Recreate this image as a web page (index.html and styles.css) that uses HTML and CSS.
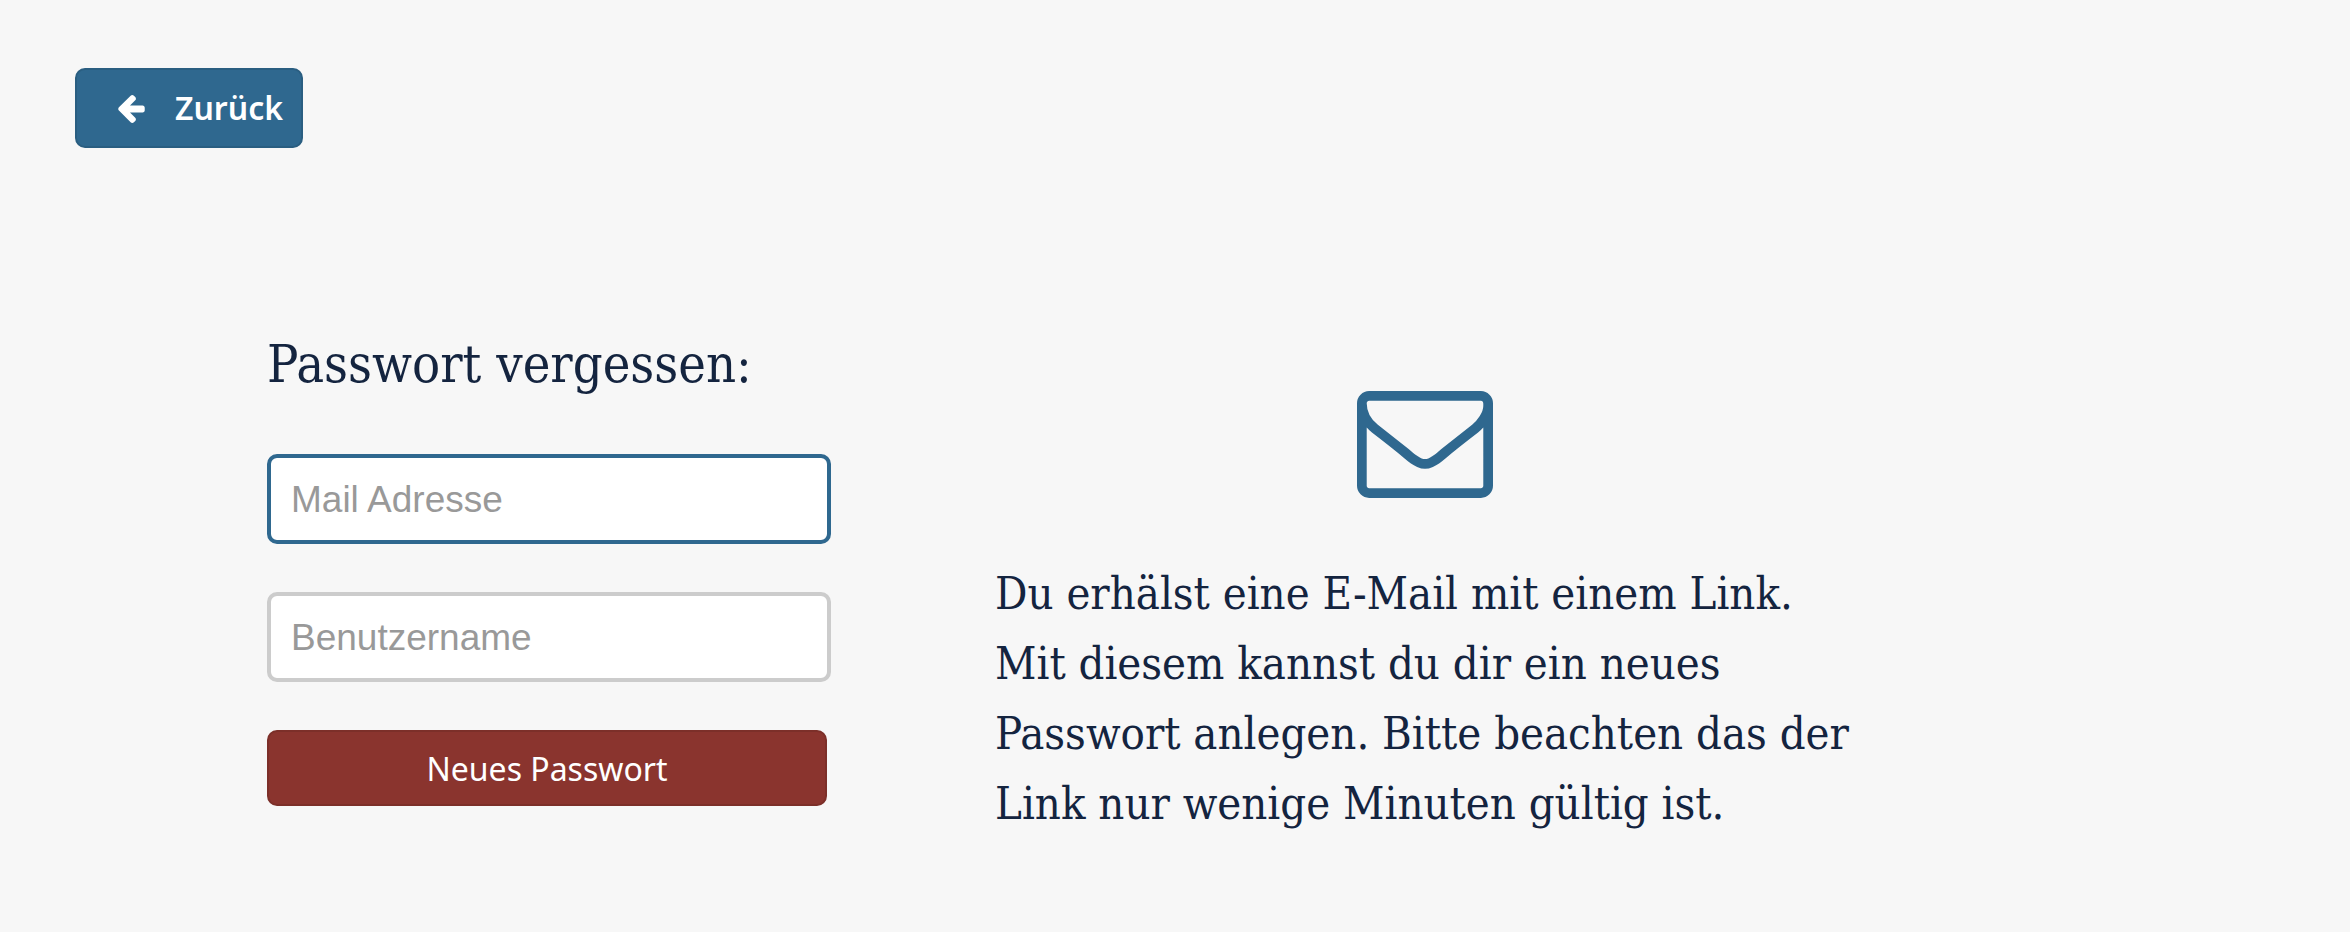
FILE: index.html
```html
<!DOCTYPE html>
<html lang="de">
<head>
<meta charset="utf-8">
<meta name="viewport" content="width=device-width, initial-scale=1">
<title>Passwort vergessen</title>
<link rel="stylesheet" href="styles.css">
</head>
<body>
<header class="topbar">
  <button class="btn btn-back" type="button">
    <svg class="icon-arrow" viewBox="192 181 1472 1558" aria-hidden="true"><path d="M1664 896v128q0 53-32.500 90.500t-84.500 37.500h-704l293 294q38 36 38 90t-38 90l-75 76q-37 37-90 37-52 0-91-37l-651-652q-37-37-37-90 0-52 37-91l651-650q38-38 91-38 52 0 90 38l75 74q38 38 38 91t-38 91l-293 293h704q52 0 84.500 37.500t32.500 90.500z"/></svg>
    <span>Zurück</span>
  </button>
</header>
<main class="content">
  <form class="reset-form">
    <h1 class="title">Passwort vergessen:</h1>
    <input class="field field-active" type="email" placeholder="Mail Adresse" aria-label="Mail Adresse">
    <input class="field" type="text" placeholder="Benutzername" aria-label="Benutzername">
    <button class="btn btn-submit" type="submit">Neues Passwort</button>
  </form>
  <section class="info">
    <svg class="icon-mail" viewBox="0 256 1792 1408" aria-hidden="true"><path d="M1664 1504v-768q-32 36-69 66-268 206-426 338-51 43-83 67t-86.500 48.500-102.500 24.500h-2q-48 0-102.500-24.500t-86.500-48.500-83-67q-158-132-426-338-37-30-69-66v768q0 13 9.500 22.500t22.500 9.500h1472q13 0 22.500-9.500t9.500-22.500zm0-1051v-24.500l-.5-13-3-12.500-5.500-9-9-7.500-14-2.500h-1472q-13 0-22.500 9.500t-9.500 22.500q0 168 147 284 193 152 401 317 6 5 35 29.500t46 37.500 44.500 31.500 50.500 27.500 43 9h2q20 0 43-9t50.500-27.500 44.500-31.500 46-37.500 35-29.500q208-165 401-317 54-43 100.500-115.500t46.500-131.500zm128-37v1088q0 66-47 113t-113 47h-1472q-66 0-113-47t-47-113v-1088q0-66 47-113t113-47h1472q66 0 113 47t47 113z"/></svg>
    <p class="text">Du erhälst eine E-Mail mit einem Link. Mit diesem kannst du dir ein neues Passwort anlegen. Bitte beachten das der Link nur wenige Minuten gültig ist.</p>
  </section>
</main>
</body>
</html>
```
FILE: styles.css
```css
* {
  box-sizing: border-box;
}

body {
  margin: 0;
  background: #f7f7f7;
  color: #14243f;
  font-family: "Roboto Slab", "DejaVu Serif Condensed", "DejaVu Serif", serif;
}

.topbar {
  padding: 68px 75px 0;
}

.btn {
  padding-bottom: 1px;
  border: 2px solid;
  border-radius: 10px;
  color: #fff;
  font-family: "Noto Sans", "Open Sans", sans-serif;
  font-size: 32px;
  cursor: pointer;
}

.btn-back {
  display: flex;
  align-items: center;
  gap: 30px;
  height: 80px;
  padding: 0 18px 2px 41px;
  background: #2f688f;
  border-color: #2a5e81;
  font-weight: 600;
}

.icon-arrow {
  width: 27px;
  height: 28px;
  margin-top: 4px;
  fill: #fff;
}

.content {
  display: flex;
  gap: 164px;
  padding: 182px 267px 90px;
}

.reset-form {
  display: flex;
  flex-direction: column;
  width: 564px;
}

.title {
  margin: 0 0 56px;
  font-size: 52px;
  font-weight: 400;
  line-height: 68px;
}

.field {
  height: 90px;
  margin-bottom: 48px;
  padding: 2px 20px 0;
  border: 4px solid #ccc;
  border-radius: 10px;
  background: #fff;
  color: #14243f;
  font-family: "Liberation Sans", Arial, sans-serif;
  font-size: 37px;
  outline: none;
}

.field::placeholder {
  color: #999;
  opacity: 1;
}

.field-active,
.field:focus {
  border-color: #2f688f;
}

.btn-submit {
  height: 76px;
  margin-right: 4px;
  background: #8a342e;
  border-color: #7c2f29;
}

.info {
  display: flex;
  flex-direction: column;
  align-items: center;
  width: 860px;
  padding-top: 61px;
}

.icon-mail {
  width: 136px;
  height: 107px;
  fill: #2f688f;
}

.text {
  margin: 61px 0 0;
  font-size: 45px;
  line-height: 70px;
}
```
